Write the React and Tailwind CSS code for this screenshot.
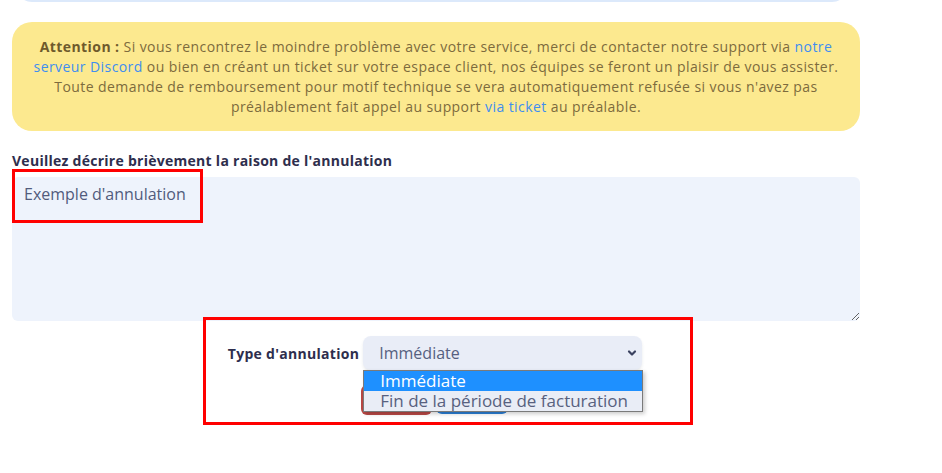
import React from 'react';

const font = { fontFamily: '"Open Sans", "Noto Sans", sans-serif' };

export default function App() {
  return (
    <div className="relative w-[942px] h-[473px] overflow-hidden bg-white font-['Open_Sans',sans-serif]">
      <div className="ml-3 w-[848px]">
        {/* bloc précédent, coupé en haut */}
        <div className="-mt-[40px] h-[42px] ml-[4px] mr-[12px] rounded-2xl bg-[#dce9fb]" />

        {/* alerte */}
        <div className="mt-[20px] rounded-[20px] bg-[#fce98f] px-4 pt-[15px] pb-[14px] text-center text-[14px] leading-[20px] text-[#7d6b3d] tracking-[0.42px]">
          <b className="font-bold text-[#6e5a2c]">Attention :</b> Si vous rencontrez le moindre problème avec votre service, merci de contacter notre support via <span className="text-[#3f8ef0]">notre</span>
          <br />
          <span className="text-[#3f8ef0]">serveur Discord</span> ou bien en créant un ticket sur votre espace client, nos équipes se feront un plaisir de vous assister.
          <br />
          Toute demande de remboursement pour motif technique se vera automatiquement refusée si vous n'avez pas
          <br />
          préalablement fait appel au support <span className="text-[#3f8ef0]">via ticket</span> au préalable.
        </div>

        {/* raison */}
        <div className="mt-[20px] mb-[6px] text-[14px] leading-[20px] font-bold tracking-[0.27px] text-[#2e2e4d]">
          Veuillez décrire brièvement la raison de l'annulation
        </div>
        <textarea
          readOnly
          defaultValue="Exemple d'annulation"
          className="block w-full h-[144px] rounded-md bg-[#eef3fc] px-3 py-[5px] text-[16px] leading-[24px] text-[#515b7c] outline-none"
          style={font}
        />

        {/* type */}
        <div className="relative mt-[15px] flex items-center justify-center gap-1 pr-[2px]">
          <span className="text-[14px] font-bold tracking-[0.3px] text-[#2e2e4d]">Type d'annulation</span>
          <div className="relative w-[279px]">
            <div className="flex h-[34px] items-center justify-between rounded-lg bg-[#e9edf7] pl-4 pr-[4px] text-[16px] text-[#56607f] shadow-[0_2px_3px_rgba(60,70,100,0.12)]">
              <span>Immédiate</span>
              <svg width="12" height="12" viewBox="0 0 12 12" fill="none" stroke="#3b4260" strokeWidth="2.2" strokeLinecap="round" strokeLinejoin="round">
                <path d="M3 4.5 6 7.5 9 4.5" />
              </svg>
            </div>
            <div className="absolute left-0 top-[34px] z-10 w-[280px] border border-[#7a7a7a] bg-[#e9edf6] text-[17px] leading-[20px] shadow-[2px_2px_4px_rgba(0,0,0,0.2)]">
              <div className="bg-[#1e90ff] pl-4 text-white">Immédiate</div>
              <div className="pl-4 text-[#58617f]">Fin de la période de facturation</div>
            </div>
          </div>
        </div>

        {/* boutons */}
        <div className="mt-[15px] flex justify-center gap-1 pr-[3px]">
          <div className="h-[30px] w-[71px] rounded-md bg-[#b94845]" />
          <div className="h-[29px] w-[72px] rounded-md bg-[#2b7fd6]" />
        </div>
      </div>

      {/* annotations */}
      <div className="absolute left-[12px] top-[169px] h-[54px] w-[191px] border-[3px] border-[#ff0000]" />
      <div className="absolute left-[203px] top-[317px] h-[108px] w-[490px] border-[3px] border-[#ff0000] z-20" />
    </div>
  );
}
